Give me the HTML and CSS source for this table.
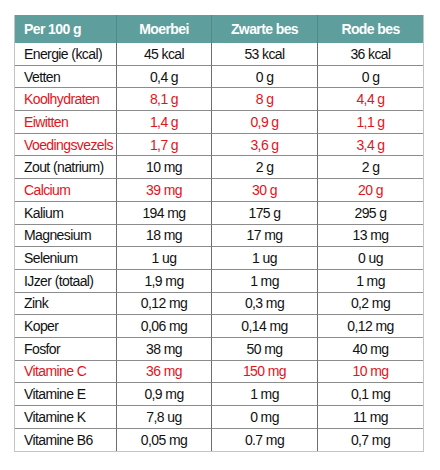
FILE: index.html
```html
<!DOCTYPE html>
<html>
<head>
<meta charset="utf-8">
<link rel="stylesheet" href="styles.css">
</head>
<body>
<table class="nutri">
  <colgroup>
    <col class="c1"><col class="c2"><col class="c3"><col class="c4">
  </colgroup>
  <thead>
    <tr><th class="first">Per 100 g</th><th>Moerbei</th><th>Zwarte bes</th><th class="last">Rode bes</th></tr>
  </thead>
  <tbody>
    <tr><td class="first">Energie (kcal)</td><td>45 kcal</td><td>53 kcal</td><td class="last">36 kcal</td></tr>
    <tr><td class="first">Vetten</td><td>0,4 g</td><td>0 g</td><td class="last">0 g</td></tr>
    <tr class="red"><td class="first">Koolhydraten</td><td>8,1 g</td><td>8 g</td><td class="last">4,4 g</td></tr>
    <tr class="red"><td class="first">Eiwitten</td><td>1,4 g</td><td>0,9 g</td><td class="last">1,1 g</td></tr>
    <tr class="red"><td class="first">Voedingsvezels</td><td>1,7 g</td><td>3,6 g</td><td class="last">3,4 g</td></tr>
    <tr><td class="first">Zout (natrium)</td><td>10 mg</td><td>2 g</td><td class="last">2 g</td></tr>
    <tr class="red"><td class="first">Calcium</td><td>39 mg</td><td>30 g</td><td class="last">20 g</td></tr>
    <tr><td class="first">Kalium</td><td>194 mg</td><td>175 g</td><td class="last">295 g</td></tr>
    <tr><td class="first">Magnesium</td><td>18 mg</td><td>17 mg</td><td class="last">13 mg</td></tr>
    <tr><td class="first">Selenium</td><td>1 ug</td><td>1 ug</td><td class="last">0 ug</td></tr>
    <tr><td class="first">IJzer (totaal)</td><td>1,9 mg</td><td>1 mg</td><td class="last">1 mg</td></tr>
    <tr><td class="first">Zink</td><td>0,12 mg</td><td>0,3 mg</td><td class="last">0,2 mg</td></tr>
    <tr><td class="first">Koper</td><td>0,06 mg</td><td>0,14 mg</td><td class="last">0,12 mg</td></tr>
    <tr><td class="first">Fosfor</td><td>38 mg</td><td>50 mg</td><td class="last">40 mg</td></tr>
    <tr class="red"><td class="first">Vitamine C</td><td>36 mg</td><td>150 mg</td><td class="last">10 mg</td></tr>
    <tr><td class="first">Vitamine E</td><td>0,9 mg</td><td>1 mg</td><td class="last">0,1 mg</td></tr>
    <tr><td class="first">Vitamine K</td><td>7,8 ug</td><td>0 mg</td><td class="last">11 mg</td></tr>
    <tr class="lastrow"><td class="first">Vitamine B6</td><td>0,05 mg</td><td>0.7 mg</td><td class="last">0,7 mg</td></tr>
  </tbody>
</table>
</body>
</html>
```
FILE: styles.css
```css
html, body {
  margin: 0;
  padding: 0;
  background: #ffffff;
}
body {
  padding: 15px 0 0 14px;
  font-family: "Liberation Sans", Arial, sans-serif;
}
.nutri {
  border-collapse: separate;
  border-spacing: 0;
  table-layout: fixed;
  width: 410px;
  border-left: 1px solid #c4c4c4;
  border-right: 1px solid #c4c4c4;
  border-bottom: 1px solid #c4c4c4;
}
.c1 { width: 102px; }
.c2 { width: 95px; }
.c3 { width: 106px; }
.c4 { width: 105px; }

.nutri th {
  background: #5e9e9c;
  color: #ffffff;
  font-weight: bold;
  font-size: 14px;
  letter-spacing: -0.6px;
  height: 28px;
  padding: 0;
  text-align: center;
  border-right: 1px solid #4f8a88;
  box-sizing: border-box;
}
.nutri td {
  font-size: 14px;
  letter-spacing: -0.6px;
  color: #111111;
  height: 22.7px;
  padding: 0;
  text-align: center;
  border-right: 1px solid #6e6e6e;
  border-bottom: 1px solid #8c8c8c;
  box-sizing: border-box;
}
.nutri .first {
  text-align: left;
  padding-left: 9px;
}
.nutri .last {
  border-right: none;
}
.nutri .lastrow td {
  border-bottom: none;
}
.nutri .red td {
  color: #e3131b;
}
```
